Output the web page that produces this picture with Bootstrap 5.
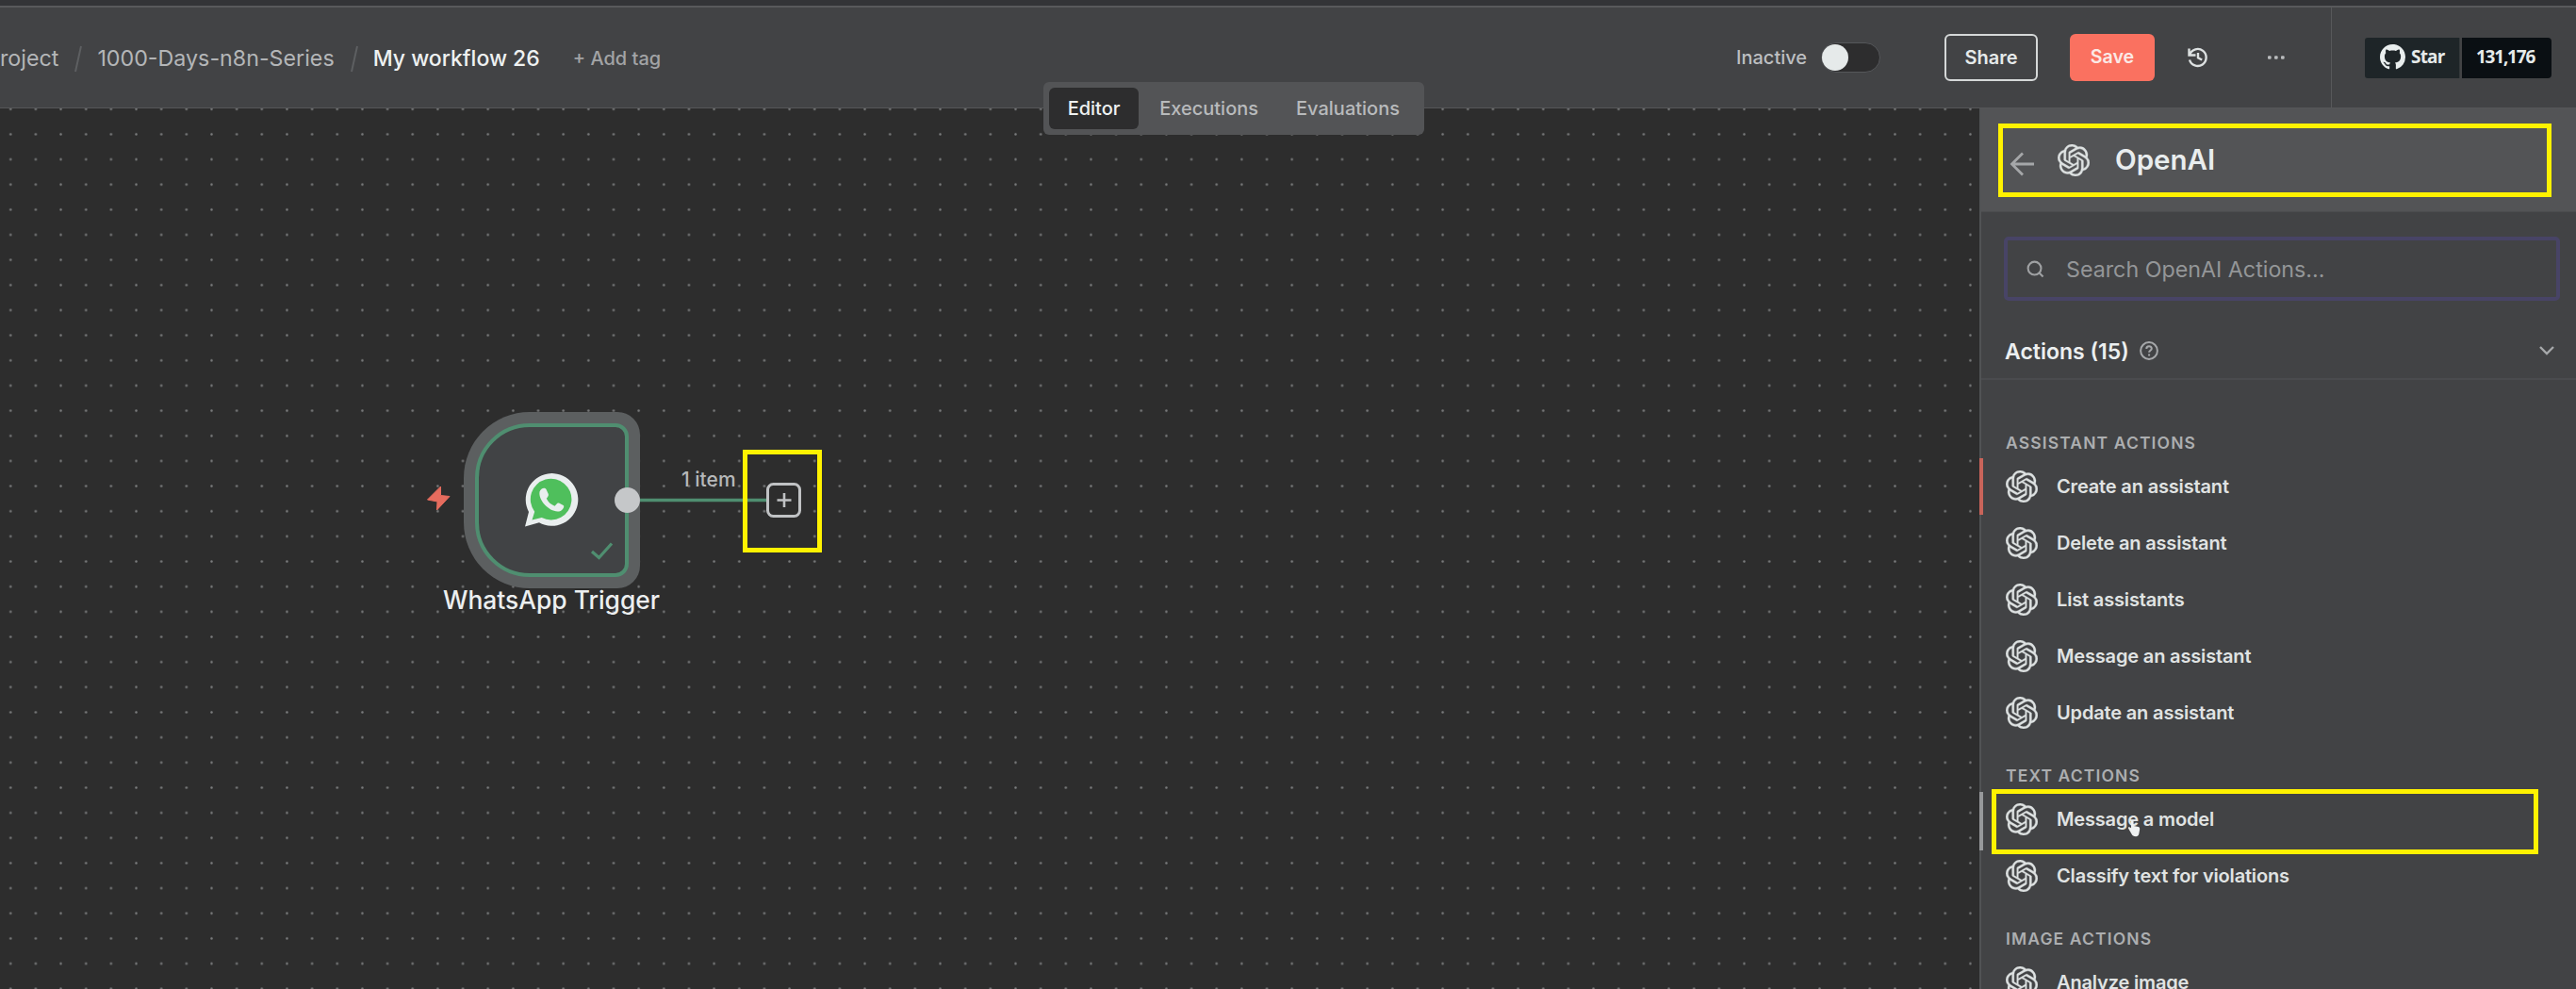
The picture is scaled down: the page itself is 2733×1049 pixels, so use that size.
<!DOCTYPE html>
<html lang="en">
<head>
<meta charset="utf-8">
<title>My workflow 26</title>
<link href="https://cdn.jsdelivr.net/npm/bootstrap@5.3.0/dist/css/bootstrap.min.css" rel="stylesheet">
<style>
body{font-family:Inter,"Liberation Sans",sans-serif;background:#2d2d2d;color:#e6eaea;width:2733px;height:1049px;overflow:hidden;line-height:1;white-space:nowrap}
svg{display:block;flex:none}
.topstrip{height:6px;background:#333437;flex:none}
.topbar{height:109px;background:#424345;border-top:2px solid #58595b;border-bottom:1px solid #555658;flex:none}
.crumbs{font-size:23.25px;color:#b4b6b8;padding-top:2px}
.crumbs .sep{width:10px;height:29px;color:#5d5f61;margin:0 15px 0 16px}
.crumb-name{font-size:23px;font-weight:500;color:#eef1f1}
.addtag{font-size:20px;font-weight:500;color:#a2a4a6;margin-left:35px}
.inactive{font-size:20px;font-weight:500;color:#bdbfc1;width:90px}
.toggle{width:63px;height:32px;border-radius:16px;background:#2d2d2e;border:1px solid #55575a;padding:1px 0;margin-right:68px}
.toggle span{display:block;width:28px;height:28px;border-radius:50%;background:#e6eaea}
.share-btn{width:99px;height:50px;border:2px solid #d5d8d8;border-radius:6px;color:#e6eaea;font-size:20px;font-weight:600;margin-right:34px;padding:0;line-height:1}
.save-btn{width:90px;height:50px;border:0;border-radius:6px;background:#fa7160;color:#fbe9e6;font-size:19.6px;font-weight:600;margin-right:34px;padding:0;line-height:1}
.gh{width:260px;border-left:1px solid #58595b;padding-left:35px}
.gh-star,.gh-count{height:43px;font-family:"Open Sans",sans-serif;font-weight:700;font-size:19px;color:#e6eaea;padding-bottom:2px}
.gh-star{width:101px;background:#1e2528;border-radius:3px 0 0 3px;padding-left:16px;letter-spacing:-.8px;border-right:1px solid #34393b}
.gh-star svg{margin-right:6px}
.gh-count{width:95px;background:#0a0f13;border-radius:0 4px 4px 0;letter-spacing:-1.2px;margin-left:2px;padding-right:3px}
.canvas{background-color:#2d2d2d;background-image:radial-gradient(circle at center,#7c7d7e 0,#6e6f70 .9px,transparent 1.7px);background-size:26.667px 26.667px;background-position:-2.1px -12.6px;overflow:hidden}
.viewtabs{left:1107px;top:87px;width:404px;height:56px;background:#535456;border-radius:6px;padding:6px;z-index:3}
.viewtabs .tab{font-size:20px;font-weight:500;color:#b8babc;padding:0 20px;height:44px}
.viewtabs .on{background:#2d2d2e;color:#eef1f1;border-radius:6px;padding:0;width:97px;margin-right:2px}
.hl{position:absolute;border:5px solid #fff200;z-index:5}
.hl-node{left:788px;top:362px;width:84px;height:109px}
.hl-title{left:18px;top:16px;width:587px;height:78px}
.hl-item{left:11px;top:-2px;width:580px;height:69px}
.halo{position:absolute;left:492px;top:322px;width:187px;height:187px;background:#5c5f60;border-radius:70px 24px 24px 70px;padding:12px}
.wnode{width:100%;height:100%;background:#414345;border:4.5px solid #4f8e70;border-radius:58px 14px 14px 58px}
.art{position:absolute;left:440px;top:300px}
.one-item{position:absolute;left:723px;top:383px;font-size:21px;font-weight:500;color:#b6b8ba}
.node-label{position:absolute;left:470px;top:507px;font-size:26.4px;font-weight:500;color:#eceff0;line-height:1.1}
.sidepanel{width:633px;background:#424345;border-left:2px solid #515355;flex:none}
.sidepanel>*{flex:none}
.ph{height:110px;background:#535456;border-bottom:1px solid #4c4d4f;padding-left:30px}
.ph h1{font-size:29.5px;font-weight:600;margin:0 0 0 27px;color:#e9edee}
.searchbox{height:68px;margin:26px 17px 0 24px;border:4px solid #484466;border-radius:5px;padding-left:20px;font-size:23.25px;color:#949698}
.searchbox span{padding-top:2px}
.act{height:84px;border-bottom:2px solid #4a4b4e;padding:0 22px 0 25px;color:#a6a8aa}
.act b{font-size:23px;font-weight:600;color:#eceff0;margin-right:11px;padding-top:2px}
.sec{font-size:17.5px;font-weight:600;letter-spacing:1.12px;color:#acaeb0;padding-left:26px;height:53px;padding-top:28px}
.sec-first{height:83px;padding-top:58px}
.act-row{height:60px;padding-left:26px;font-size:20px;font-weight:600;letter-spacing:-.16px;color:#e0e3e3;position:relative}
.act-row svg{margin-right:20px}
.tick{position:absolute;left:-2px;top:0;width:4px;height:60px;background:#c9645a}
.tick-grey{background:#97999b;height:62px;top:1px}
.ico{color:#dde1e1}
.hand{position:absolute;left:155px;top:30px}
</style>
</head>
<body class="d-flex flex-column position-relative">
<svg width="0" height="0" class="position-absolute"><defs>
<symbol id="oai" viewBox="0 0 24 24"><path fill="currentColor" stroke="currentColor" stroke-width=".25" d="M22.2819 9.8211a5.9847 5.9847 0 0 0-.5157-4.9108 6.0462 6.0462 0 0 0-6.5098-2.9A6.0651 6.0651 0 0 0 4.9807 4.1818a5.9847 5.9847 0 0 0-3.9977 2.9 6.0462 6.0462 0 0 0 .7427 7.0966 5.98 5.98 0 0 0 .511 4.9107 6.051 6.051 0 0 0 6.5146 2.9001A5.9847 5.9847 0 0 0 13.2599 24a6.0557 6.0557 0 0 0 5.7718-4.2058 5.9894 5.9894 0 0 0 3.9977-2.9001 6.0557 6.0557 0 0 0-.7475-7.0729zm-9.022 12.6081a4.4755 4.4755 0 0 1-2.8764-1.0408l.1419-.0804 4.7783-2.7582a.7948.7948 0 0 0 .3927-.6813v-6.7369l2.02 1.1686a.071.071 0 0 1 .038.052v5.5826a4.504 4.504 0 0 1-4.4945 4.4944zm-9.6607-4.1254a4.4708 4.4708 0 0 1-.5346-3.0137l.142.0852 4.783 2.7582a.7712.7712 0 0 0 .7806 0l5.8428-3.3685v2.3324a.0804.0804 0 0 1-.0332.0615L9.74 19.9502a4.4992 4.4992 0 0 1-6.1408-1.6464zM2.3408 7.8956a4.485 4.485 0 0 1 2.3655-1.9728V11.6a.7664.7664 0 0 0 .3879.6765l5.8144 3.3543-2.0201 1.1685a.0757.0757 0 0 1-.071 0l-4.8303-2.7865A4.504 4.504 0 0 1 2.3408 7.872zm16.5963 3.8558L13.1038 8.364 15.1192 7.2a.0757.0757 0 0 1 .071 0l4.8303 2.7913a4.4944 4.4944 0 0 1-.6765 8.1042v-5.6772a.79.79 0 0 0-.407-.667zm2.0107-3.0231l-.142-.0852-4.7735-2.7818a.7759.7759 0 0 0-.7854 0L9.409 9.2297V6.8974a.0662.0662 0 0 1 .0284-.0615l4.8303-2.7866a4.4992 4.4992 0 0 1 6.6802 4.66zM8.3065 12.863l-2.02-1.1638a.0804.0804 0 0 1-.038-.0567V6.0742a4.4992 4.4992 0 0 1 7.3757-3.4537l-.142.0805L8.704 5.459a.7948.7948 0 0 0-.3927.6813zm1.0976-2.3654l2.602-1.4998 2.6069 1.4998v2.9994l-2.5974 1.4997-2.6067-1.4997Z"/></symbol>
</defs></svg>

<div class="topstrip"></div>
<header class="topbar d-flex align-items-stretch">
  <div class="crumbs d-flex align-items-center me-auto">
    <span>roject</span>
    <svg class="sep" viewBox="0 0 10 29"><path d="M8 1 2 28" stroke="currentColor" stroke-width="2"/></svg>
    <span>1000-Days-n8n-Series</span>
    <svg class="sep" viewBox="0 0 10 29"><path d="M8 1 2 28" stroke="currentColor" stroke-width="2"/></svg>
    <span class="crumb-name">My workflow 26</span>
    <span class="addtag">+ Add tag</span>
  </div>
  <div class="d-flex align-items-center">
    <span class="inactive">Inactive</span>
    <span class="toggle"><span></span></span>
    <button class="btn share-btn">Share</button>
    <button class="btn save-btn">Save</button>
    <svg class="ico" width="24" height="24" viewBox="0 0 24 24" fill="none" stroke="currentColor" stroke-width="2.4" style="margin-right:61px"><path d="M3.2 8.8A9 9 0 1 1 3 14.5M2.5 2.5v7h7M12 7v5.2l4.2 2.3"/></svg>
    <svg class="ico" width="20" height="6" viewBox="0 0 20 6" fill="#b9bbbd" style="margin-right:48px"><rect x="1" y="1.2" width="3.6" height="3.6" rx="1"/><rect x="8" y="1.2" width="3.6" height="3.6" rx="1"/><rect x="15" y="1.2" width="3.6" height="3.6" rx="1"/></svg>
  </div>
  <div class="gh d-flex align-items-center">
    <div class="gh-star d-flex align-items-center"><svg width="27" height="27" viewBox="0 0 16 16" fill="#e9eeee"><path d="M8 0C3.58 0 0 3.58 0 8c0 3.54 2.29 6.53 5.47 7.59.4.07.55-.17.55-.38 0-.19-.01-.82-.01-1.49-2.01.37-2.53-.49-2.69-.94-.09-.23-.48-.94-.82-1.13-.28-.15-.68-.52-.01-.53.63-.01 1.08.58 1.23.82.72 1.21 1.87.87 2.33.66.07-.52.28-.87.51-1.07-1.78-.2-3.64-.89-3.64-3.95 0-.87.31-1.59.82-2.15-.08-.2-.36-1.02.08-2.12 0 0 .67-.21 2.2.82.64-.18 1.32-.27 2-.27s1.36.09 2 .27c1.53-1.04 2.2-.82 2.2-.82.44 1.1.16 1.92.08 2.12.51.56.82 1.27.82 2.15 0 3.07-1.87 3.75-3.65 3.95.29.25.54.73.54 1.48 0 1.07-.01 1.93-.01 2.2 0 .21.15.46.55.38A8.01 8.01 0 0 0 16 8c0-4.42-3.58-8-8-8z"/></svg>Star</div>
    <div class="gh-count d-flex align-items-center justify-content-center">131,176</div>
  </div>
</header>

<nav class="viewtabs position-absolute d-flex">
  <span class="tab on d-flex align-items-center justify-content-center">Editor</span>
  <span class="tab d-flex align-items-center">Executions</span>
  <span class="tab d-flex align-items-center">Evaluations</span>
</nav>

<main class="d-flex flex-grow-1 overflow-hidden">
  <section class="canvas flex-grow-1 position-relative">
    <div class="halo"><div class="wnode"></div></div>
    <!-- Connector, port, icons of the trigger node -->
    <svg class="art" width="440" height="220" viewBox="440 415 440 220" fill="none">
      <path d="M453.500 530 467.500 516 467.500 525.500 477 526.500 463.500 541 464 532Z" fill="#e66c5e" stroke="#e66c5e" stroke-width="1"/>
      <path d="M679 530.500H813" stroke="#4f8e70" stroke-width="3.600"/>
      <circle cx="665.500" cy="530.500" r="13.500" fill="#c5c7c9"/>
      <rect x="814.500" y="513.500" width="34" height="34" rx="6" fill="#2d2d2d" stroke="#c0c2c4" stroke-width="3"/>
      <path d="M832 523v15M824.500 530.500h15" stroke="#c0c2c4" stroke-width="2.600"/>
      <path d="M628 585l7.500 6.500 13.500-15" stroke="#4f8e70" stroke-width="3.200"/>
      <path d="M557 558.500l4-15.500a27.800 27.800 0 1 1 11 11.200Z" fill="#e9eeee"/>
      <path d="M564.500 551.500l2.700-8.800a21.800 21.800 0 1 1 7.500 6.300Z" fill="#4fbf5c"/>
      <path d="M572.500 521.500c1.200-3.800 5.600-5 7-2.500l2.300 5c.6 1.800-1 3.200-2 4.800 2 4 4.800 6.400 8.700 7.900 1.700-1.500 2.500-3.800 4.500-3.200l4.700 2.400c1.700 1.300-.8 5-3 6-9.700 3.300-24-10.500-22.200-20.400Z" fill="#e9eeee"/>
    </svg>
    <div class="one-item">1 item</div>
    <div class="node-label">WhatsApp Trigger</div>
    <div class="hl hl-node"></div>
  </section>

  <aside class="sidepanel d-flex flex-column">
    <div class="ph position-relative d-flex align-items-center">
      <div class="hl hl-title"></div>
      <svg width="28" height="28" viewBox="0 0 28 28" fill="none" stroke="#a5a7a9" stroke-width="2.800" class="mt-2"><path d="M26 14H3M14 2.500 2.500 14 14 25.500"/></svg>
      <svg class="ico" width="34" height="34" style="margin-left:23px"><use href="#oai"/></svg>
      <h1>OpenAI</h1>
    </div>
    <div class="searchbox d-flex align-items-center">
      <svg width="19" height="19" viewBox="0 0 20 20" fill="none" stroke="#9fa1a3" stroke-width="2.200" style="margin-right:23px"><circle cx="9" cy="9" r="7.300"/><path d="m13.500 13.500 5 5"/></svg>
      <span>Search OpenAI Actions...</span>
    </div>
    <div class="act d-flex align-items-center pt-4">
      <b>Actions (15)</b>
      <svg width="20" height="20" viewBox="0 0 20 20" fill="none" stroke="currentColor" stroke-width="2"><circle cx="10" cy="10" r="8.900"/><path d="M7.300 8c0-3.600 5.500-3.500 5.500-.3 0 2-2.700 2.100-2.700 4M10.100 13.500v2"/></svg>
      <svg class="ms-auto" width="18" height="12" viewBox="0 0 18 12" fill="none" stroke="currentColor" stroke-width="2.400"><path d="m2 2 7 7 7-7"/></svg>
    </div>
    <div class="sec sec-first">ASSISTANT ACTIONS</div>
    <div class="act-row d-flex align-items-center"><i class="tick"></i><svg class="ico" width="34" height="34"><use href="#oai"/></svg>Create an assistant</div>
    <div class="act-row d-flex align-items-center"><svg class="ico" width="34" height="34"><use href="#oai"/></svg>Delete an assistant</div>
    <div class="act-row d-flex align-items-center"><svg class="ico" width="34" height="34"><use href="#oai"/></svg>List assistants</div>
    <div class="act-row d-flex align-items-center"><svg class="ico" width="34" height="34"><use href="#oai"/></svg>Message an assistant</div>
    <div class="act-row d-flex align-items-center"><svg class="ico" width="34" height="34"><use href="#oai"/></svg>Update an assistant</div>
    <div class="sec">TEXT ACTIONS</div>
    <div class="act-row d-flex align-items-center"><i class="tick tick-grey"></i><svg class="ico" width="34" height="34"><use href="#oai"/></svg>Message a model
      <div class="hl hl-item"></div>
      <svg class="hand" width="14" height="20" viewBox="0 0 14 20"><path d="M4 1.500c1-1.500 2.600-.6 2.600.8V7l5.200 1c1.300.4 1.500 1.500 1.300 3l-.8 4.500c-.5 2-1.500 2.700-3.200 2.700-2.600 0-3.600-.8-4.800-3L1 9.600c-.4-1.400 1-2 3-.4Z" fill="#eef1f1"/></svg>
    </div>
    <div class="act-row d-flex align-items-center"><svg class="ico" width="34" height="34"><use href="#oai"/></svg>Classify text for violations</div>
    <div class="sec">IMAGE ACTIONS</div>
    <div class="act-row d-flex align-items-center"><svg class="ico" width="34" height="34"><use href="#oai"/></svg>Analyze image</div>
  </aside>
</main>
<script src="https://cdn.jsdelivr.net/npm/bootstrap@5.3.0/dist/js/bootstrap.bundle.min.js"></script>
</body>
</html>
